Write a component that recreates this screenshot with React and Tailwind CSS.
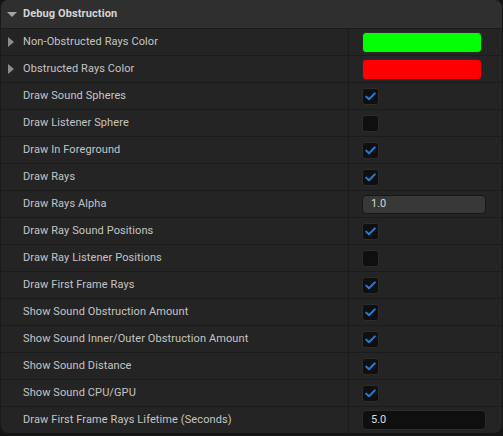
import React from "react";

const ROWS = [
  { label: "Non-Obstructed Rays Color", kind: "color", color: "bg-[#00ff00]", expand: true },
  { label: "Obstructed Rays Color", kind: "color", color: "bg-[#ff0000]", expand: true },
  { label: "Draw Sound Spheres", kind: "check", on: true },
  { label: "Draw Listener Sphere", kind: "check", on: false },
  { label: "Draw In Foreground", kind: "check", on: true },
  { label: "Draw Rays", kind: "check", on: true },
  { label: "Draw Rays Alpha", kind: "slider", value: "1.0" },
  { label: "Draw Ray Sound Positions", kind: "check", on: true },
  { label: "Draw Ray Listener Positions", kind: "check", on: false },
  { label: "Draw First Frame Rays", kind: "check", on: true },
  { label: "Show Sound Obstruction Amount", kind: "check", on: true },
  { label: "Show Sound Inner/Outer Obstruction Amount", kind: "check", on: true },
  { label: "Show Sound Distance", kind: "check", on: true },
  { label: "Show Sound CPU/GPU", kind: "check", on: true },
  { label: "Draw First Frame Rays Lifetime (Seconds)", kind: "number", value: "5.0" },
];

function Checkbox({ on }) {
  return (
    <div className="w-[17px] h-[17px] rounded-[3px] bg-[#0f0f0f] border border-[#2c2c2c] flex items-center justify-center">
      {on && (
        <svg width="11" height="9" viewBox="0 0 11 9" fill="none">
          <path
            d="M1.2 4.6 L4 7.3 L9.8 1.4"
            stroke="#1f7fe0"
            strokeWidth="2"
            strokeLinecap="round"
            strokeLinejoin="round"
          />
        </svg>
      )}
    </div>
  );
}

function Value({ row }) {
  if (row.kind === "color")
    return (
      <div className={`w-[120px] h-[21px] rounded-[4px] border border-[#2a2a2a] ${row.color}`} />
    );
  if (row.kind === "check") return <Checkbox on={row.on} />;
  if (row.kind === "slider")
    return (
      <div className="w-[124px] h-[19px] rounded-[4px] bg-[#383838] border border-[#161616] flex items-center pl-[8px] text-[11px] text-[#d6d6d6]">
        {row.value}
      </div>
    );
  return (
    <div className="w-[124px] h-[20px] rounded-[4px] bg-[#0f0f0f] border border-[#2c2c2c] flex items-center pl-[8px] text-[11px] text-[#dcdcdc]">
      {row.value}
    </div>
  );
}

export default function App() {
  return (
    <div className="min-h-screen bg-[#151515] font-['Roboto','Liberation_Sans',sans-serif]">
      <div className="w-[502px] rounded-[8px] overflow-hidden bg-[#242424] border-l border-[#1a1a1a]">
        <div className="h-[28px] bg-[#2f2f2f] flex items-center">
          <div className="w-[22px] flex justify-center">
            <svg width="10" height="5" viewBox="0 0 10 5">
              <path d="M0 0 L10 0 L5 5 Z" fill="#a3a3a3" />
            </svg>
          </div>
          <span className="text-[11px] font-bold text-[#d4d4d4] tracking-[0.1px]">Debug Obstruction</span>
        </div>
        {ROWS.map((r) => (
          <div key={r.label} className="h-[27px] flex border-t border-[#1b1b1b]">
            <div className="w-[347px] flex items-center">
              <div className="w-[22px] flex justify-center pr-[3px]">
                {r.expand && (
                  <svg width="6" height="10" viewBox="0 0 6 10">
                    <path d="M0 0 L6 5 L0 10 Z" fill="#8c8c8c" />
                  </svg>
                )}
              </div>
              <span className="text-[11px] text-[#c4c4c4] tracking-[0.1px]">{r.label}</span>
            </div>
            <div className="flex-1 border-l border-[#1b1b1b] flex items-center pl-[13px]">
              <Value row={r} />
            </div>
          </div>
        ))}
      </div>
    </div>
  );
}
